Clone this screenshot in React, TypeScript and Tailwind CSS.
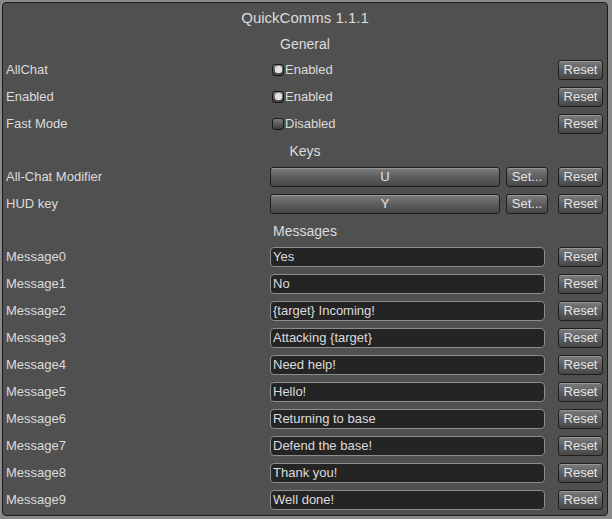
import React from 'react';

const font = { fontFamily: '"Liberation Sans", Arial, sans-serif' };

const btn =
  'h-[20px] rounded-[3px] border border-[#1e1e1e] bg-gradient-to-b from-[#7c7c7c] via-[#5e5e5e] to-[#474747] shadow-[inset_0_1px_0_rgba(255,255,255,0.22)] text-[13px] leading-[18px] text-[#e4e4e4] flex items-center justify-center';

const ResetButton = () => <div className={`${btn} w-[45px]`}>Reset</div>;

const Toggle = ({ on, label }: { on: boolean; label: string }) => (
  <div className="flex items-center pl-[2px]">
    <div className="w-[12px] h-[12px] rounded-[3px] border border-[#181818] bg-gradient-to-b from-[#7e7e7e] via-[#5a5a5a] to-[#3e3e3e] flex items-center justify-center">
      {on && <div className="w-[7px] h-[7px] rounded-full bg-[#e2e2e2] shadow-[0_0_1px_#ffffff]" />}
    </div>
    <span className="text-[13px] text-[#dcdcdc] ml-[1px]">{label}</span>
  </div>
);

const Row = ({ label, children }: { label: string; children: React.ReactNode }) => (
  <div className="h-[27px] flex items-center pr-[4px]">
    <div className="w-[267px] pl-[3px] text-[13px] text-[#dcdcdc]">{label}</div>
    <div className="flex-1 flex items-center">{children}</div>
    <ResetButton />
  </div>
);

const Header = ({ title, h }: { title: string; h: string }) => (
  <div className={`${h} flex items-center justify-center text-[14px] text-[#dcdcdc]`}>{title}</div>
);

const messages = [
  'Yes',
  'No',
  '{target} Incoming!',
  'Attacking {target}',
  'Need help!',
  'Hello!',
  'Returning to base',
  'Defend the base!',
  'Thank you!',
  'Well done!',
];

export default function App() {
  return (
    <div className="w-[612px] h-[519px] bg-[#8a8a8a] p-[2px]" style={font}>
      <div className="w-[606px] h-[514px] rounded-[4px] border border-[#1c1c1c] bg-[#505050] flex flex-col">
        <div className="h-[30px] flex items-center justify-center text-[15px] text-[#dcdcdc]">
          QuickComms 1.1.1
        </div>
        <Header title="General" h="h-[23px]" />
        <Row label="AllChat">
          <Toggle on label="Enabled" />
        </Row>
        <Row label="Enabled">
          <Toggle on label="Enabled" />
        </Row>
        <Row label="Fast Mode">
          <Toggle on={false} label="Disabled" />
        </Row>
        <Header title="Keys" h="h-[26px] pt-[2px]" />
        <Row label="All-Chat Modifier">
          <div className={`${btn} w-[230px]`}>U</div>
          <div className={`${btn} w-[42px] ml-[6px]`}>Set...</div>
        </Row>
        <Row label="HUD key">
          <div className={`${btn} w-[230px]`}>Y</div>
          <div className={`${btn} w-[42px] ml-[6px]`}>Set...</div>
        </Row>
        <Header title="Messages" h="h-[26px] pt-[2px]" />
        {messages.map((m, i) => (
          <Row key={i} label={`Message${i}`}>
            <div className="w-[275px] h-[20px] rounded-[4px] border border-[#8c8c8c] bg-[#242424] pl-[2px] text-[13px] leading-[18px] text-[#dcdcdc]">
              {m}
            </div>
          </Row>
        ))}
      </div>
    </div>
  );
}
